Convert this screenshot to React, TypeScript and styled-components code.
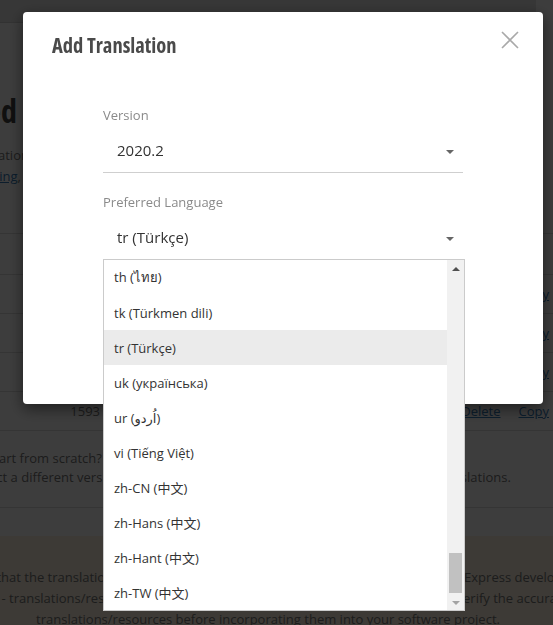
import React from "react";
import styled, { createGlobalStyle } from "styled-components";

const GlobalStyle = createGlobalStyle`
  html, body { margin: 0; padding: 0; }
  body {
    width: 553px;
    height: 625px;
    overflow: hidden;
    background: #ffffff;
    font-family: "Open Sans", "Noto Sans", "DejaVu Sans", "Noto Sans CJK SC", sans-serif;
  }
  * { box-sizing: border-box; }
`;

/* ---------- background page ---------- */

const Page = styled.div`
  height: 625px;
  padding-right: 17px;
  display: flex;
  flex-direction: column;
  color: #777;
  font-size: 13px;
`;

const NavBar = styled.div`
  height: 23px;
  flex-shrink: 0;
  background: #e5e5e5;
  border-bottom: 1px solid #d2d2d2;
`;

const ContainerRow = styled.div`
  display: flex;
  justify-content: center;
`;

const Container = styled.div`
  width: 760px;
  flex-shrink: 0;
  padding: 0 15px;
`;

const PageTitle = styled.h1`
  margin: 68px 0 0;
  font-family: "Open Sans", sans-serif;
  font-stretch: 75%;
  font-weight: 700;
  font-size: 32px;
  line-height: 40px;
  color: #444;
  white-space: nowrap;
`;

const Lead = styled.p`
  margin: 14px 0 0;
  line-height: 21px;
  white-space: nowrap;
`;

const Link = styled.a`
  color: #337ab7;
  text-decoration: underline;
`;

const Table = styled.div`
  margin-top: 46px;
  border-bottom: 1px solid #ddd;
`;

const Row = styled.div<{ $head?: boolean }>`
  display: flex;
  align-items: center;
  height: ${(p) => (p.$head ? 41 : 39)}px;
  border-top: 1px solid #ddd;
  font-weight: ${(p) => (p.$head ? 700 : 400)};
`;

const VersionCell = styled.div`
  width: 110px;
`;

const CountCell = styled.div`
  width: 87px;
  text-align: right;
`;

const Spacer = styled.div`
  flex: 1;
`;

const Actions = styled.div`
  display: flex;
  gap: 18px;
  padding-right: 84px;
`;

const Note = styled.p`
  margin: 18px 0 0;
  line-height: 19px;
  white-space: nowrap;
`;

const Divider = styled.div`
  margin-top: 20px;
  border-top: 1px solid #ddd;
`;

const Banner = styled.div`
  margin-top: 28px;
  padding: 31px 15px 20px;
  background: #fdf1e0;
  text-align: center;
  line-height: 21px;
  white-space: nowrap;
`;

/* ---------- modal ---------- */

const Backdrop = styled.div`
  position: fixed;
  inset: 0;
  background: rgba(0, 0, 0, 0.76);
`;

const ModalLayer = styled.div`
  position: fixed;
  inset: 0;
  padding: 12px 0 0 23px;
`;

const Modal = styled.div`
  position: relative;
  width: 520px;
  background: #fff;
  border-radius: 4px;
  box-shadow: 0 5px 15px rgba(0, 0, 0, 0.5);
`;

const Header = styled.div`
  padding: 21px 29px 0;
`;

const Title = styled.h4`
  margin: 0;
  font-family: "Open Sans", sans-serif;
  font-stretch: 75%;
  font-weight: 700;
  font-size: 20.5px;
  line-height: 24px;
  color: #4a4a4a;
`;

const CloseButton = styled.button`
  position: absolute;
  top: 19px;
  right: 24px;
  width: 18px;
  height: 18px;
  padding: 0;
  border: 0;
  background: none;
  display: flex;
  align-items: center;
  justify-content: center;
`;

const Body = styled.div`
  padding: 49px 80px 144px;
  display: flex;
  flex-direction: column;
  gap: 20px;
`;

const Field = styled.div`
  display: flex;
  flex-direction: column;
  gap: 4px;
`;

const Label = styled.label`
  font-size: 13px;
  line-height: 18px;
  color: #8a8a8a;
`;

const SelectWrap = styled.div`
  position: relative;
`;

const Select = styled.div`
  height: 45px;
  display: flex;
  align-items: center;
  justify-content: space-between;
  padding: 0 9px 0 14px;
  border-bottom: 1px solid #cfcfcf;
  font-size: 15px;
  color: #333;
`;

const Caret = styled.span<{ $dir?: "up" | "down"; $color?: string }>`
  width: 0;
  height: 0;
  border-left: 4px solid transparent;
  border-right: 4px solid transparent;
  ${(p) =>
    p.$dir === "up"
      ? `border-bottom: 4px solid ${p.$color || "#666"};`
      : `border-top: 4px solid ${p.$color || "#666"};`}
  margin-top: ${(p) => (p.$dir === "up" ? 0 : 3)}px;
`;

const Dropdown = styled.div`
  position: absolute;
  top: calc(100% - 1px);
  left: 0;
  width: calc(100% + 2px);
  display: flex;
  border: 1px solid #cbcbcb;
  background: #fff;
  z-index: 2;
`;

const Options = styled.div`
  flex: 1;
  display: flex;
  flex-direction: column;
`;

const Option = styled.div<{ $active?: boolean }>`
  height: 35px;
  display: flex;
  align-items: center;
  padding-left: 10px;
  font-size: 13px;
  color: #333;
  white-space: nowrap;
  background: ${(p) => (p.$active ? "#ebebeb" : "#fff")};
`;

const ScrollBar = styled.div`
  width: 17px;
  display: flex;
  flex-direction: column;
  background: #f1f1f1;
`;

const ScrollButton = styled.div`
  height: 17px;
  display: flex;
  align-items: center;
  justify-content: center;
`;

const Track = styled.div`
  flex: 1;
  display: flex;
  flex-direction: column;
  justify-content: flex-end;
`;

const Thumb = styled.div`
  height: 40px;
  margin: 0 2px;
  background: #c1c1c1;
`;

const languages = [
  "th (ไทย)",
  "tk (Türkmen dili)",
  "tr (Türkçe)",
  "uk (українська)",
  "ur (اُردو)",
  "vi (Tiếng Việt)",
  "zh-CN (中文)",
  "zh-Hans (中文)",
  "zh-Hant (中文)",
  "zh-TW (中文)",
];

const rows = [
  { v: "2020.1", n: 1620 },
  { v: "19.2", n: 1611 },
  { v: "19.1", n: 1604 },
  { v: "18.2", n: 1593 },
];

export default function App() {
  return (
    <>
      <GlobalStyle />
      <Page>
        <NavBar />
        <ContainerRow>
          <Container>
            <PageTitle>Localized Resources</PageTitle>
            <Lead>
              Add a full translation for the selected product version
              <br />
              or <Link>continue editing</Link>, if you already have one.
            </Lead>
            <Table>
              <Row $head>
                <VersionCell>Version</VersionCell>
                <CountCell>Strings</CountCell>
                <Spacer />
              </Row>
              {rows.map((r) => (
                <Row key={r.v}>
                  <VersionCell>{r.v}</VersionCell>
                  <CountCell>{r.n}</CountCell>
                  <Spacer />
                  <Actions>
                    <Link>Delete</Link>
                    <Link>Copy</Link>
                  </Actions>
                </Row>
              ))}
            </Table>
            <Note>
              Don't want to start from scratch?
              <br />
              Or you can select a different version of the product as a starting point and copy all of its translations.
            </Note>
            <Divider />
          </Container>
        </ContainerRow>
        <ContainerRow>
          <Container>
            <Banner>
              Please note that the translations/resources were created by community users, not by DevExpress developer team.
              <br />
              Caution - translations/resources are provided “as is” without any warranties. Please verify the accuracy of
              <br />
              translations/resources before incorporating them into your software project.
            </Banner>
          </Container>
        </ContainerRow>
      </Page>

      <Backdrop />
      <ModalLayer>
        <Modal>
          <Header>
            <Title>Add Translation</Title>
          </Header>
          <CloseButton aria-label="Close">
            <svg width="18" height="18" viewBox="0 0 18 18">
              <path d="M1 1 L17 17 M17 1 L1 17" stroke="#a9a9a9" strokeWidth="1.6" fill="none" />
            </svg>
          </CloseButton>
          <Body>
            <Field>
              <Label>Version</Label>
              <SelectWrap>
                <Select>
                  <span>2020.2</span>
                  <Caret />
                </Select>
              </SelectWrap>
            </Field>
            <Field>
              <Label>Preferred Language</Label>
              <SelectWrap>
                <Select>
                  <span>tr (Türkçe)</span>
                  <Caret />
                </Select>
                <Dropdown>
                  <Options>
                    {languages.map((l) => (
                      <Option key={l} $active={l.startsWith("tr ")}>
                        {l}
                      </Option>
                    ))}
                  </Options>
                  <ScrollBar>
                    <ScrollButton>
                      <Caret $dir="up" $color="#505050" />
                    </ScrollButton>
                    <Track>
                      <Thumb />
                    </Track>
                    <ScrollButton>
                      <Caret $color="#a3a3a3" />
                    </ScrollButton>
                  </ScrollBar>
                </Dropdown>
              </SelectWrap>
            </Field>
          </Body>
        </Modal>
      </ModalLayer>
    </>
  );
}
